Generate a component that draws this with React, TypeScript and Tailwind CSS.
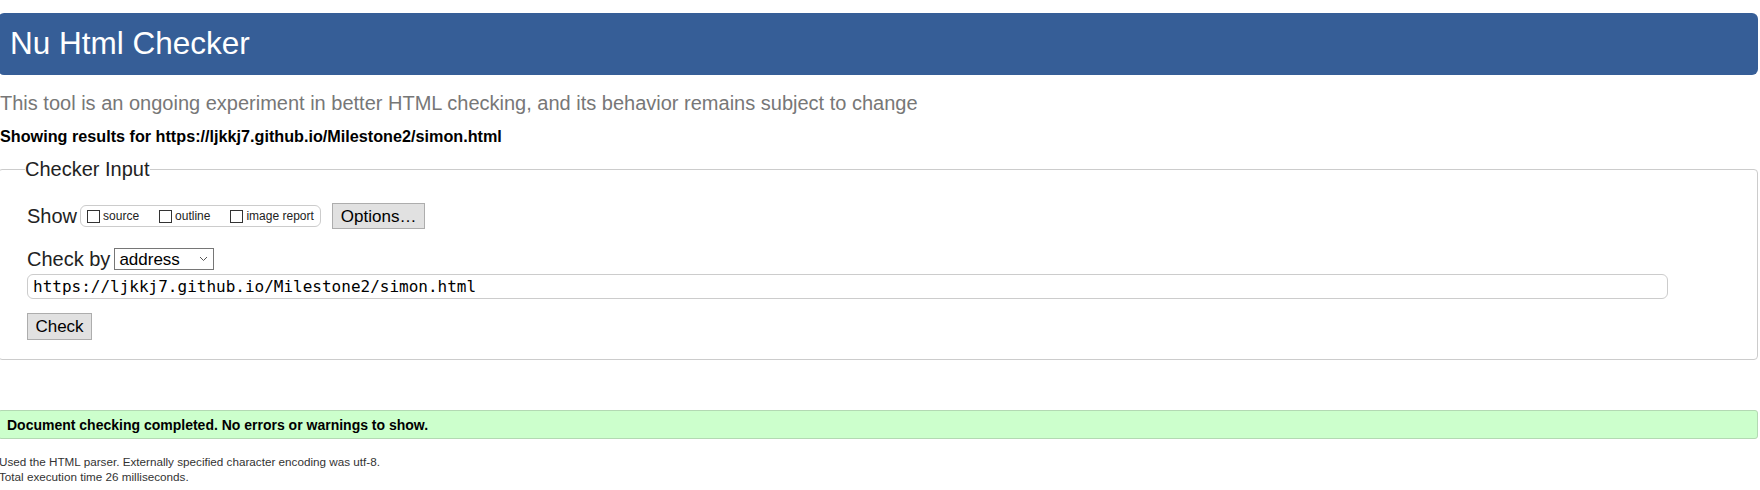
import { useState } from "react";

const sans = "font-['Liberation_Sans',Arial,sans-serif]";

function Box({ label }: { label: string }) {
   const [on, setOn] = useState(false);
   return (
      <label className="flex items-center gap-[3px]">
         <input
            type="checkbox"
            checked={on}
            onChange={() => setOn(!on)}
            className="appearance-none w-[13px] h-[13px] border border-[#333] bg-white checked:bg-[#0075ff]"
         />
         <span className="text-[12px] text-[#222] leading-none">{label}</span>
      </label>
   );
}

export default function App() {
   return (
      <div className={`${sans} bg-white w-[1760px] h-[490px] overflow-hidden`}>
         <div className="-ml-[2px] w-[1760px] pt-[13px]">
            <header className="h-[62px] bg-[#365e97] rounded-[6px] pl-[12px] flex items-center">
               <h1 className="text-[31.5px] text-white leading-none">Nu Html Checker</h1>
            </header>

            <p className="mt-[17px] pl-[2px] text-[20px] leading-[23px] text-[#777]">
               This tool is an ongoing experiment in better HTML checking, and its behavior remains subject to change
            </p>
            <p className="mt-[12px] pl-[2px] text-[16.2px] leading-[18px] font-bold text-black">
               Showing results for https://ljkkj7.github.io/Milestone2/simon.html
            </p>

            <fieldset className="mt-[13px] border border-[#ccc] rounded-[4px] pl-[26px] pt-[22px] pb-[19px]">
               <legend className="text-[20px] leading-[23px] text-[#222]">Checker Input</legend>

               <div className="pl-[2px] flex items-center h-[26px]">
                  <span className="text-[20px] text-[#222] leading-none">Show</span>
                  <div className="ml-[3px] h-[22px] border border-[#ccc] rounded-[6px] px-[6px] flex items-center gap-[20px]">
                     <Box label="source" />
                     <Box label="outline" />
                     <Box label="image report" />
                  </div>
                  <button className="ml-[11px] h-[26px] px-[8px] border border-[#adadad] bg-[#e1e1e1] text-[17px] text-black leading-none">
                     Options…
                  </button>
               </div>

               <div className="pl-[2px] mt-[19px] flex items-end h-[22px]">
                  <span className="text-[20px] text-[#222] leading-none pb-[1px]">Check by</span>
                  <div className="ml-[4px] w-[100px] h-[22px] border border-[#767676] bg-white flex items-center justify-between pl-[4px] pr-[5px]">
                     <span className="text-[17px] text-black leading-none">address</span>
                     <svg width="9" height="6" viewBox="0 0 9 6" fill="none" stroke="#555" strokeWidth="1">
                        <path d="M1 1l3.5 3.5L8 1" />
                     </svg>
                  </div>
               </div>

               <div className="pl-[2px] mt-[4px]">
                  <div className="w-[1641px] h-[25px] border border-[#ccc] rounded-[6px] flex items-center pl-[5px]">
                     <span className="font-['DejaVu_Sans_Mono',monospace] text-[16px] text-black leading-none">
                        https://ljkkj7.github.io/Milestone2/simon.html
                     </span>
                  </div>
               </div>

               <div className="pl-[2px] mt-[14px]">
                  <button className="h-[27px] w-[65px] border border-[#adadad] bg-[#e1e1e1] text-[17px] text-black leading-none">
                     Check
                  </button>
               </div>
            </fieldset>

            <div className="mt-[50px] h-[29px] bg-[#ccffcc] border border-[#b3d9b3] rounded-[3px] flex items-center pl-[8px]">
               <span className="text-[14px] font-bold text-black leading-none">
                  Document checking completed. No errors or warnings to show.
               </span>
            </div>

            <div className="mt-[16px] text-[11.7px] leading-[14.5px] text-[#333] pl-[1px]">
               <p>Used the HTML parser. Externally specified character encoding was utf-8.</p>
               <p>Total execution time 26 milliseconds.</p>
            </div>
         </div>
      </div>
   );
}
